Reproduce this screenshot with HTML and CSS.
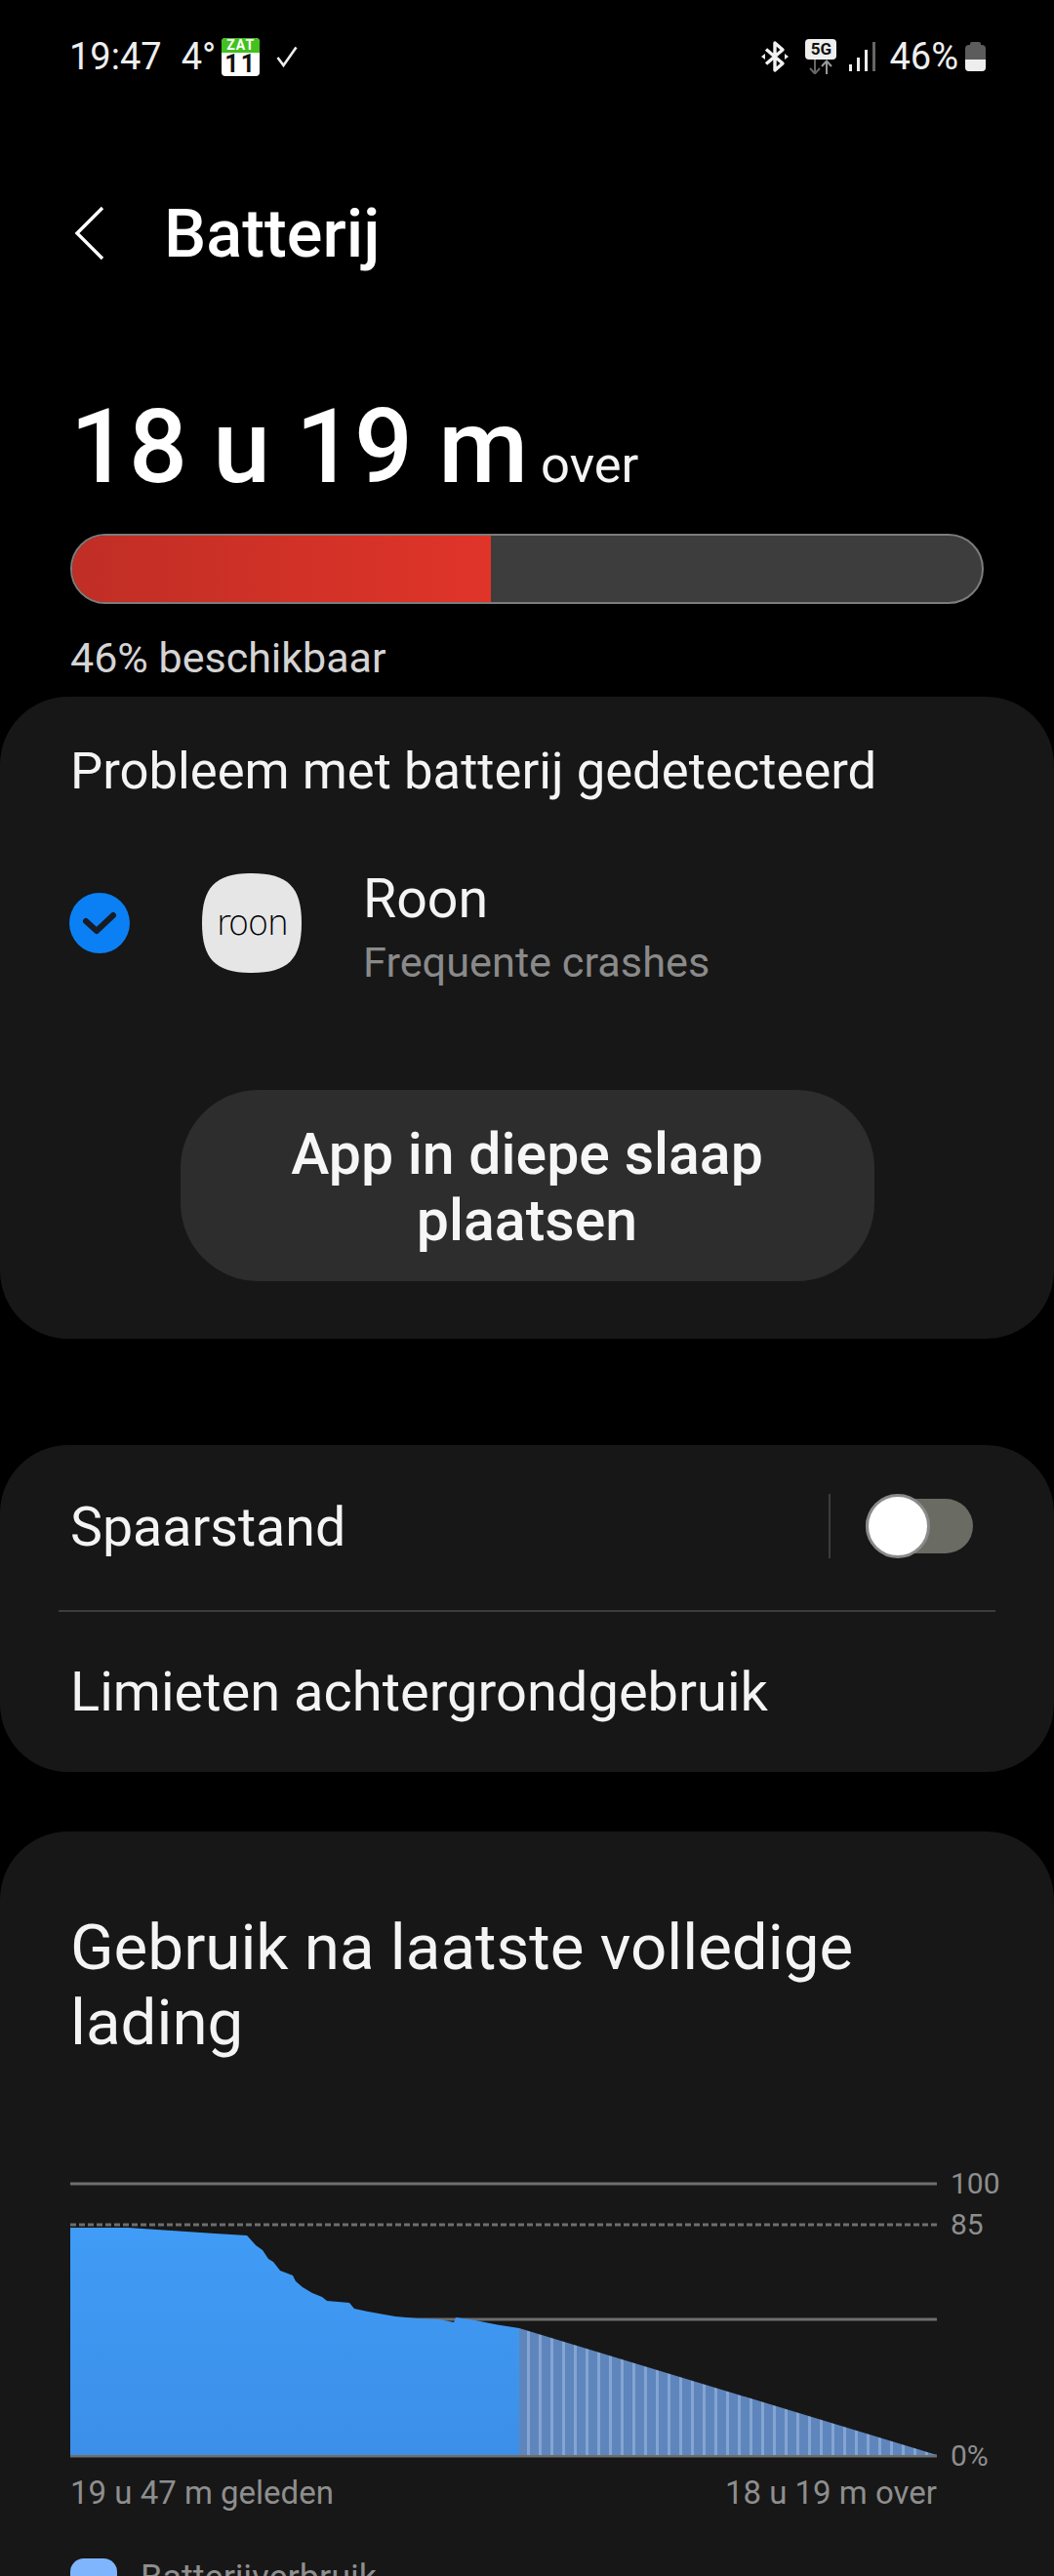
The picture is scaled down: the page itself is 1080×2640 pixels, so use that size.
FILE: index.html
```html
<!DOCTYPE html>
<html lang="nl">
<head>
    <meta charset="UTF-8">
    <meta name="viewport" content="width=device-width, initial-scale=1.0">
    <title>Batterij</title>
    <link rel="stylesheet" href="styles.css">
</head>
<body>
    <div class="status-bar">
        <div class="status-left">
            <span class="time">19:47</span>
            <span class="temp">4°</span>
            <div class="cal">
                <div class="cal-top">ZAT</div>
                <div class="cal-day">11</div>
            </div>
            <svg class="tick" width="22" height="22" viewBox="0 0 22 22"><path d="M1.5 12 L7.5 20 L20.5 1.5" fill="none" stroke="#eee" stroke-width="2.6"/></svg>
        </div>
        <div class="status-right">
            <svg class="bt" width="28" height="34" viewBox="0 0 28 34"><path d="M5 9.5 L22 24 L14 31 V3 L22 10 L5 24.5" fill="none" stroke="#f2f2f2" stroke-width="3.4" stroke-linejoin="round"/><path d="M0 17 L4 14 V20 Z M28 17 L24 14 V20 Z" fill="#f2f2f2"/></svg>
            <div class="net">
                <div class="net-box">5G</div>
                <svg width="26" height="15" viewBox="0 0 26 15"><path d="M7 0 V14 M2 9 L7 14.5 L12 9" fill="none" stroke="#666" stroke-width="2"/><path d="M19 15 V1.5 M14 7 L19 1.5 L24 7" fill="none" stroke="#999" stroke-width="2"/></svg>
            </div>
            <svg class="signal" width="27" height="30" viewBox="0 0 27 30"><rect x="0" y="23" width="3" height="7" fill="#eee"/><rect x="8" y="16" width="3" height="14" fill="#eee"/><rect x="16" y="8" width="3" height="22" fill="#eee"/><rect x="24" y="0" width="3" height="30" fill="#666"/></svg>
            <span class="pct">46%</span>
            <div class="batt"><div class="batt-fill"></div></div>
        </div>
    </div>

    <header class="title-row">
        <svg class="back" width="32" height="56" viewBox="0 0 32 56"><path d="M29 2 L3 28 L29 54" fill="none" stroke="#fff" stroke-width="3.4"/></svg>
        <h1>Batterij</h1>
    </header>

    <section class="summary">
        <div class="remain"><span class="remain-big">18 u 19 m</span><span class="remain-small">over</span></div>
        <div class="bar"><div class="bar-fill"></div></div>
        <div class="avail">46% beschikbaar</div>
    </section>

    <section class="card card-problem">
        <h2>Probleem met batterij gedetecteerd</h2>
        <div class="app-row">
            <div class="check">
                <svg width="62" height="62" viewBox="0 0 62 62"><circle cx="31" cy="31" r="31" fill="#0b80f5"/><path d="M17 29 L28 39 L45 23" fill="none" stroke="#171c26" stroke-width="6" stroke-linecap="round" stroke-linejoin="round"/></svg>
            </div>
            <div class="app-icon">roon</div>
            <div class="app-text">
                <div class="app-name">Roon</div>
                <div class="app-sub">Frequente crashes</div>
            </div>
        </div>
        <button class="sleep-btn">App in diepe slaap plaatsen</button>
    </section>

    <section class="card card-saver">
        <div class="saver-row">
            <span>Spaarstand</span>
            <div class="saver-ctrl">
                <div class="vline"></div>
                <div class="toggle"><div class="knob"></div></div>
            </div>
        </div>
        <div class="hline"></div>
        <div class="limit-row">Limieten achtergrondgebruik</div>
    </section>

    <section class="card card-usage">
        <h2>Gebruik na laatste volledige lading</h2>
        <div class="chart">
            <svg class="plot" width="1008" height="300" viewBox="0 0 1008 300">
                <defs>
                    <linearGradient id="blue" x1="0" y1="0" x2="0" y2="1">
                        <stop offset="0" stop-color="#409cf6"/>
                        <stop offset="1" stop-color="#3c8fe8"/>
                    </linearGradient>
                    <pattern id="stripes" x="0" y="0" width="12" height="300" patternUnits="userSpaceOnUse">
                        <rect width="12" height="300" fill="#5e86bd"/>
                        <rect x="0" width="3" height="300" fill="#84a4d2"/>
                    </pattern>
                </defs>
                <g stroke="#6e6e6e" stroke-width="3">
                    <line x1="0" y1="10" x2="888" y2="10"/>
                    <line x1="0" y1="52" x2="888" y2="52" stroke-dasharray="6 3"/>
                    <line x1="0" y1="149" x2="888" y2="149"/>
                    <line x1="0" y1="289" x2="888" y2="289"/>
                </g>
                <polygon fill="url(#stripes)" points="460,158 888,288 460,288"/>
                <polygon fill="url(#blue)" points="0,55 59,55 148,61 181,63 190,73 197,78 203,87 208,90 215,99 228,104 231,110 238,116 248,122 258,126 263,130 286,132 291,138 305,141 333,146 355,148 378,149 393,152 395,147 415,150 435,154 460,158 460,288 0,288"/>
            </svg>
            <div class="ylab ylab-100">100</div>
            <div class="ylab ylab-85">85</div>
            <div class="ylab ylab-0">0%</div>
        </div>
        <div class="xlabels"><span>19 u 47 m geleden</span><span>18 u 19 m over</span></div>
        <div class="legend"><div class="swatch"></div><span>Batterijverbruik</span></div>
    </section>
</body>
</html>
```

FILE: styles.css
```css
html, body {
    margin: 0;
    height: 2640px;
    overflow: hidden;
    background-color: #000;
}

body {
    font-family: 'Roboto', 'Liberation Sans', sans-serif;
    color: #f4f4f4;
}

h1, h2 {
    margin: 0;
    font-weight: 400;
}

/* status bar */
.status-bar {
    height: 116px;
    padding: 0 70px 0 71px;
    display: flex;
    justify-content: space-between;
    align-items: center;
    box-sizing: border-box;
}

.status-left, .status-right {
    display: flex;
    align-items: center;
}

.time, .temp, .pct {
    font-size: 38px;
    color: #eee;
}

.temp {
    margin-left: 20px;
}

.cal {
    width: 39px;
    height: 39px;
    margin-left: 6px;
    border-radius: 4px;
    background-color: #fff;
    font-weight: 700;
    text-align: center;
}

.cal-top {
    height: 15px;
    border-radius: 4px 4px 0 0;
    background-color: #43c11f;
    color: #fff;
    font-size: 14px;
    line-height: 15px;
    letter-spacing: 1px;
}

.cal-day {
    color: #111;
    font-size: 25px;
    line-height: 24px;
    letter-spacing: 2px;
}

.tick {
    margin-left: 17px;
}

.bt {
    margin-right: 17px;
}

.net {
    width: 32px;
    display: flex;
    flex-direction: column;
    align-items: center;
    margin-right: 13px;
}

.net-box {
    width: 32px;
    height: 21px;
    border-radius: 4px;
    background-color: #eee;
    color: #111;
    font-size: 17px;
    font-weight: 700;
    line-height: 21px;
    text-align: center;
}

.signal {
    margin-right: 14px;
}

.batt {
    position: relative;
    width: 21px;
    height: 27px;
    margin-top: 3px;
    margin-left: 7px;
    border-radius: 4px;
    background-color: #5c5c5c;
}

.batt::before {
    content: "";
    position: absolute;
    left: 5px;
    top: -3px;
    width: 11px;
    height: 3px;
    border-radius: 2px 2px 0 0;
    background-color: #5c5c5c;
}

.batt-fill {
    position: absolute;
    left: 0;
    right: 0;
    bottom: 0;
    height: 12px;
    border-radius: 0 0 4px 4px;
    background-color: #eee;
}

/* title */
.title-row {
    height: 98px;
    margin-top: 74px;
    padding-left: 76px;
    padding-bottom: 2px;
    display: flex;
    align-items: center;
}

.back {
    margin-right: 60px;
}

.title-row h1 {
    font-size: 68.5px;
    font-weight: 500;
    color: #fff;
}

/* big number and bar */
.summary {
    padding: 0 72px;
}

.remain {
    margin-top: 108px;
    height: 120px;
    line-height: 120px;
}

.remain-big {
    font-size: 105.5px;
    font-weight: 500;
    color: #fff;
    margin-right: 13px;
}

.remain-small {
    font-size: 52.5px;
}

.bar {
    height: 72px;
    margin-top: 29px;
    box-sizing: border-box;
    border: 2px solid #7c7c7c;
    border-radius: 36px;
    background-color: #3d3d3d;
    overflow: hidden;
}

.bar-fill {
    width: 46%;
    height: 100%;
    background: linear-gradient(90deg, #c02e25, #e03429);
}

.avail {
    margin-top: 30px;
    font-size: 43px;
    line-height: 50px;
    color: #d4d4d4;
}

/* cards */
.card {
    background-color: #171717;
    border-radius: 70px;
    padding: 0 72px;
}

.card-problem {
    height: 658px;
    margin-top: 15px;
    padding-top: 46px;
    box-sizing: border-box;
}

.card-problem h2 {
    font-size: 52.6px;
    line-height: 60px;
}

.app-row {
    display: flex;
    align-items: center;
    margin-top: 60px;
    margin-left: -1px;
}

.check {
    width: 62px;
    height: 62px;
}

.app-icon {
    width: 102px;
    height: 102px;
    margin-left: 74px;
    clip-path: path("M51 0 C88 0 102 14 102 51 C102 88 88 102 51 102 C14 102 0 88 0 51 C0 14 14 0 51 0 Z");
    background-color: #e6e6e6;
    color: #000;
    font-family: 'DejaVu Sans', 'Roboto', sans-serif;
    font-size: 36px;
    font-weight: 200;
    letter-spacing: -2px;
    line-height: 101px;
    text-align: center;
}

.app-text {
    margin-left: 63px;
    padding-top: 11px;
}

.app-name {
    font-size: 55.5px;
    line-height: 62px;
}

.app-sub {
    margin-top: 9px;
    font-size: 43.3px;
    line-height: 50px;
    color: #8a8a8a;
}

.sleep-btn {
    display: block;
    width: 711px;
    height: 196px;
    margin: 105px auto 0;
    padding: 4px 60px 0;
    border: none;
    border-radius: 80px;
    background-color: #2d2d2d;
    color: #f6f6f6;
    font-family: inherit;
    font-size: 59px;
    font-weight: 500;
    line-height: 68px;
}

.card-saver {
    height: 335px;
    margin-top: 109px;
}

.saver-row {
    height: 169px;
    display: flex;
    justify-content: space-between;
    align-items: center;
    font-size: 55.5px;
}

.saver-ctrl {
    display: flex;
    align-items: center;
    margin-right: 11px;
    margin-bottom: 4px;
}

.vline {
    width: 2px;
    height: 66px;
    background-color: #3c3c3c;
    margin-right: 36px;
}

.toggle {
    position: relative;
    width: 110px;
    height: 56px;
    border-radius: 28px;
    background-color: #6a6b63;
}

.knob {
    position: absolute;
    left: 0;
    top: -5px;
    width: 60px;
    height: 60px;
    border: 3px solid #8a8a8a;
    border-radius: 50%;
    background-color: #fff;
}

.hline {
    height: 2px;
    margin: 0 -12px;
    background-color: #3c3c3c;
}

.limit-row {
    height: 164px;
    line-height: 164px;
    font-size: 56px;
}

/* runs on below the fold, cut by the window */
.card-usage {
    height: 763px;
    margin-top: 61px;
    padding-top: 80px;
    box-sizing: border-box;
    border-radius: 70px 70px 0 0;
    overflow: hidden;
}

.card-usage h2 {
    font-size: 65.5px;
    line-height: 77px;
    width: 900px;
}

/* chart: labels sit on the plot's own y values */
.chart {
    position: relative;
    height: 300px;
    margin-top: 117px;
}

.plot {
    display: block;
}

.ylab {
    position: absolute;
    left: 902px;
    font-size: 30px;
    line-height: 36px;
    color: #8e8e8e;
}

.ylab-100 { top: -8px; }
.ylab-85 { top: 34px; }
.ylab-0 { top: 271px; }

.xlabels {
    width: 888px;
    display: flex;
    justify-content: space-between;
    font-size: 33px;
    line-height: 40px;
    margin-top: 7px;
    color: #8e8e8e;
}

.legend {
    display: flex;
    align-items: flex-start;
    margin-top: 47px;
    font-size: 36px;
    line-height: 40px;
    color: #8e8e8e;
}

.swatch {
    width: 48px;
    height: 48px;
    margin-right: 24px;
    border-radius: 14px;
    background-color: #7fb5fc;
}
```
